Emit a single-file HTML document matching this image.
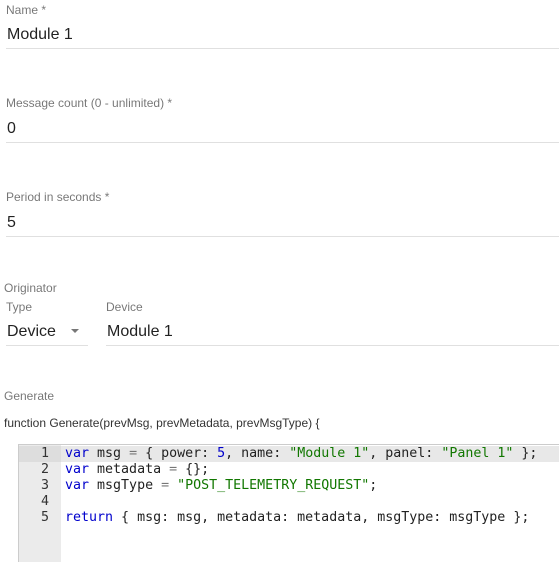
<!DOCTYPE html>
<html><head><style>
body{margin:0;width:559px;height:561px;background:#fff;font-family:"Liberation Sans",sans-serif;position:relative;overflow:hidden}
.a{position:absolute;white-space:nowrap}
.lb{font-size:12px;color:rgba(0,0,0,.54)}
.v{font-size:16px;color:rgba(0,0,0,.87)}
.ln{position:absolute;height:1px;background:#e0e0e0}
.code{position:absolute;left:18px;top:444px;width:541px;height:117px;border-top:1px solid #ccc;border-left:1px solid #ccc;font-family:"DejaVu Sans Mono",monospace;font-size:13.3px;line-height:16px}
.g{position:absolute;left:0;top:0;width:42px;height:117px;background:#ebebeb;color:#333}
.g div{text-align:right;padding-right:12px}
.act{position:absolute;left:0;top:1px;width:541px;height:16px;background:#e8e8e8}
.t{position:absolute;left:46px;top:1px;color:#222}
.t div{height:16px;white-space:pre}
.k{color:#00c}.s{color:#170}.n{color:#00c}.o{color:#777}
</style></head><body>
<div class="a lb" style="left:6px;top:3px">Name *</div>
<div class="a v" style="left:7px;top:26px">Module 1</div>
<div class="ln" style="left:6px;top:48px;width:553px"></div>
<div class="a lb" style="left:6px;top:96px">Message count (0 - unlimited) *</div>
<div class="a v" style="left:7px;top:120px">0</div>
<div class="ln" style="left:6px;top:142px;width:553px"></div>
<div class="a lb" style="left:6px;top:190px">Period in seconds *</div>
<div class="a v" style="left:7px;top:214px">5</div>
<div class="ln" style="left:6px;top:236px;width:553px"></div>
<div class="a lb" style="left:4px;top:281px">Originator</div>
<div class="a lb" style="left:6px;top:300px">Type</div>
<div class="a lb" style="left:106px;top:300px">Device</div>
<div class="a v" style="left:7px;top:323px">Device</div>
<div class="a" style="left:71px;top:329px;width:0;height:0;border-left:4px solid transparent;border-right:4px solid transparent;border-top:4px solid #777"></div>
<div class="a v" style="left:107px;top:323px">Module 1</div>
<div class="ln" style="left:6px;top:345px;width:82px"></div>
<div class="ln" style="left:106px;top:345px;width:453px"></div>
<div class="a lb" style="left:4px;top:389px">Generate</div>
<div class="a" style="left:4px;top:416px;font-size:12px;color:#333">function Generate(prevMsg, prevMetadata, prevMsgType) {</div>
<div class="code">
<div class="act"></div>
<div class="g"><div style="margin-top:1px;background:#ddd">1</div><div>2</div><div>3</div><div>4</div><div>5</div></div>
<div class="t">
<div><span class="k">var</span> msg <span class="o">=</span> { power: <span class="n">5</span>, name: <span class="s">"Module 1"</span>, panel: <span class="s">"Panel 1"</span> };</div>
<div><span class="k">var</span> metadata <span class="o">=</span> {};</div>
<div><span class="k">var</span> msgType <span class="o">=</span> <span class="s">"POST_TELEMETRY_REQUEST"</span>;</div>
<div> </div>
<div><span class="k">return</span> { msg: msg, metadata: metadata, msgType: msgType };</div>
</div>
</div>
</body></html>
